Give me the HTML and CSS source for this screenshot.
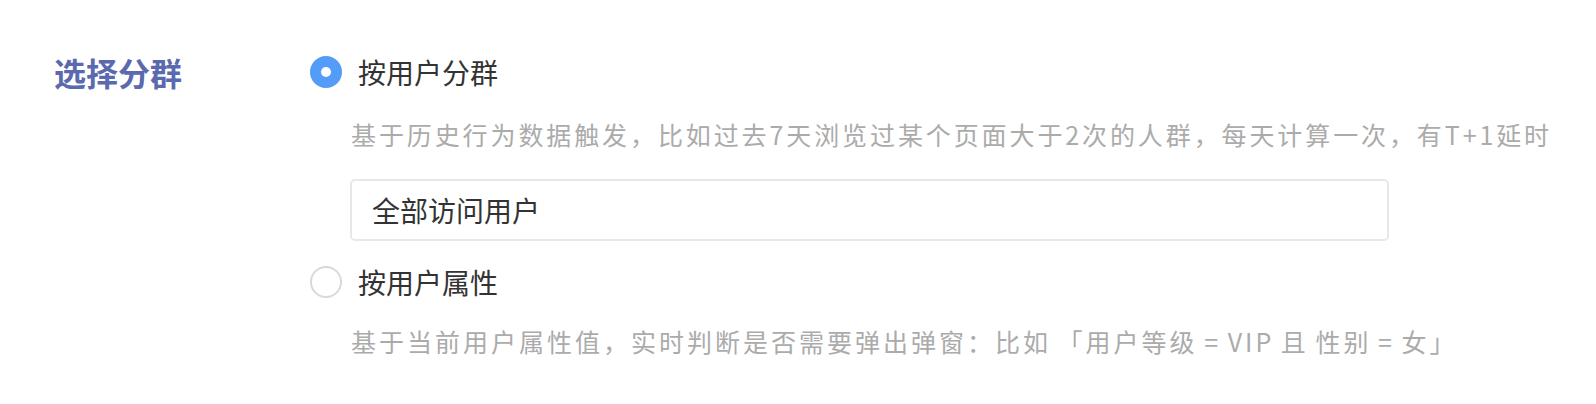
FILE: index.html
```html
<!DOCTYPE html>
<html lang="zh-CN">
<head>
<meta charset="utf-8">
<title>选择分群</title>
<link rel="stylesheet" href="styles.css">
</head>
<body>
<div class="form-row">
  <div class="form-label">选择分群</div>
  <div class="form-control">
    <label class="option">
      <span class="radio radio-checked"></span>
      <span class="option-text">按用户分群</span>
    </label>
    <div class="desc desc-first">基于历史行为数据触发，比如过去7天浏览过某个页面大于2次的人群，每天计算一次，有T+1延时</div>
    <div class="select-box">全部访问用户</div>
    <label class="option option-second">
      <span class="radio"></span>
      <span class="option-text">按用户属性</span>
    </label>
    <div class="desc desc-second">基于当前用户属性值，实时判断是否需要弹出弹窗：比如 「用户等级 = VIP 且 性别 = 女」</div>
  </div>
</div>
</body>
</html>
```

FILE: styles.css
```css
html, body {
  margin: 0;
  padding: 0;
  background: #ffffff;
}

body {
  font-family: "Noto Sans CJK SC", "Noto Sans", sans-serif;
  width: 1596px;
  height: 404px;
  overflow: hidden;
}

.form-row {
  display: flex;
  align-items: flex-start;
  padding: 50px 0 0 54px;
}

.form-label {
  width: 256px;
  font-size: 32px;
  line-height: 44px;
  font-weight: 700;
  color: #5b6aae;
}

.form-control {
  display: flex;
  flex-direction: column;
  align-items: flex-start;
}

.option {
  display: flex;
  align-items: center;
  height: 44px;
  gap: 16px;
}

.option-second {
  margin-top: 19px;
}

.radio {
  box-sizing: border-box;
  width: 32px;
  height: 32px;
  border-radius: 50%;
  border: 2px solid #d9d9d9;
  background: #ffffff;
  display: flex;
  align-items: center;
  justify-content: center;
}

.radio-checked {
  border-color: #539cf7;
  background: #539cf7;
}

.radio-checked::after {
  content: "";
  width: 10px;
  height: 10px;
  border-radius: 50%;
  background: #ffffff;
}

.option-text {
  font-size: 28px;
  line-height: 44px;
  color: #333333;
}

.desc {
  margin-left: 41px;
  font-size: 25px;
  line-height: 36px;
  color: #ababab;
  letter-spacing: 2.9px;
  white-space: nowrap;
}

.desc-first {
  margin-top: 22px;
}

.desc-second {
  margin-top: 19px;
  letter-spacing: 3px;
  word-spacing: -2px;
}

.select-box {
  box-sizing: border-box;
  margin-top: 27px;
  margin-left: 40px;
  width: 1039px;
  height: 62px;
  border: 2px solid #e8e8e8;
  border-radius: 5px;
  padding: 0 20px;
  display: flex;
  align-items: center;
  font-size: 28px;
  color: #333333;
}
```
